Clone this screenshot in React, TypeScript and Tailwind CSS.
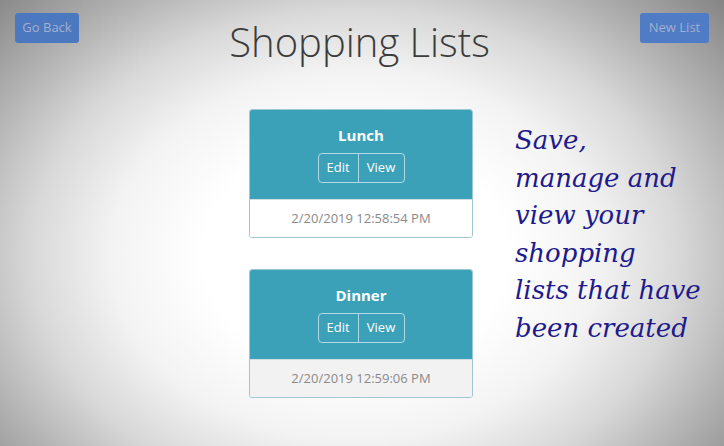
import React from 'react';

type ShoppingList = {
  name: string;
  created: string;
  footer: string;
};

const lists: ShoppingList[] = [
  { name: 'Lunch', created: '2/20/2019 12:58:54 PM', footer: 'bg-white' },
  { name: 'Dinner', created: '2/20/2019 12:59:06 PM', footer: 'bg-[#f2f2f2]' },
];

function ListCard({ list }: { list: ShoppingList }) {
  return (
    <div className="w-[224px] rounded-[3px] border border-[#9fc6d2] overflow-hidden">
      <div className="bg-[#3aa1b9] h-[89px] flex flex-col items-center pt-[15px]">
        <h2 className="text-[15px] font-bold text-white leading-5">{list.name}</h2>
        <div className="mt-[8px] flex h-[30px] rounded-[4px] border border-white/60 text-[13px] text-white">
          <button className="w-[40px] border-r border-white/60">Edit</button>
          <button className="w-[45px]">View</button>
        </div>
      </div>
      <div className={`${list.footer} h-[38px] flex items-center justify-center border-t border-[#cfdfe4] text-[13px] text-[#8a8a8a]`}>
        {list.created}
      </div>
    </div>
  );
}

export default function App() {
  return (
    <div
      className="w-[724px] h-[446px] overflow-hidden bg-[radial-gradient(ellipse_540px_410px_at_355px_255px,#ffffff_28%,#f3f3f3_45%,#d8d8d8_60%,#b0b0b0_75%,#888888_91%,#727272_100%)]"
      style={{ fontFamily: '"Open Sans", "Noto Sans", sans-serif' }}
    >
      {/* Header */}
      <div className="flex items-start justify-between px-[15px] pt-[13px]">
        <button className="h-[30px] w-[64px] rounded-[3px] bg-[#4b78bf] text-[13px] text-[#a3afd0]">Go Back</button>
        <h1 className="mt-[3px] text-[40px] font-light leading-[52px] text-[#3c3c3c]">Shopping Lists</h1>
        <button className="h-[30px] w-[69px] rounded-[3px] bg-[#4f7cc4] text-[13px] text-[#a3afd0]">New List</button>
      </div>

      {/* Lists + blurb */}
      <div className="grid grid-cols-[249px_224px_1fr] mt-[41px]">
        <div />
        <div className="flex flex-col gap-[31px]">
          {lists.map((l) => (
            <ListCard key={l.name} list={l} />
          ))}
        </div>
        <div
          className="pl-[42px] pt-[13px] text-[26px] italic leading-[37.5px] text-[#201a8c]"
          style={{ fontFamily: '"DejaVu Serif", serif' }}
        >
          Save,<br />
          manage and<br />
          view your<br />
          shopping<br />
          lists that have<br />
          been created
        </div>
      </div>
    </div>
  );
}
